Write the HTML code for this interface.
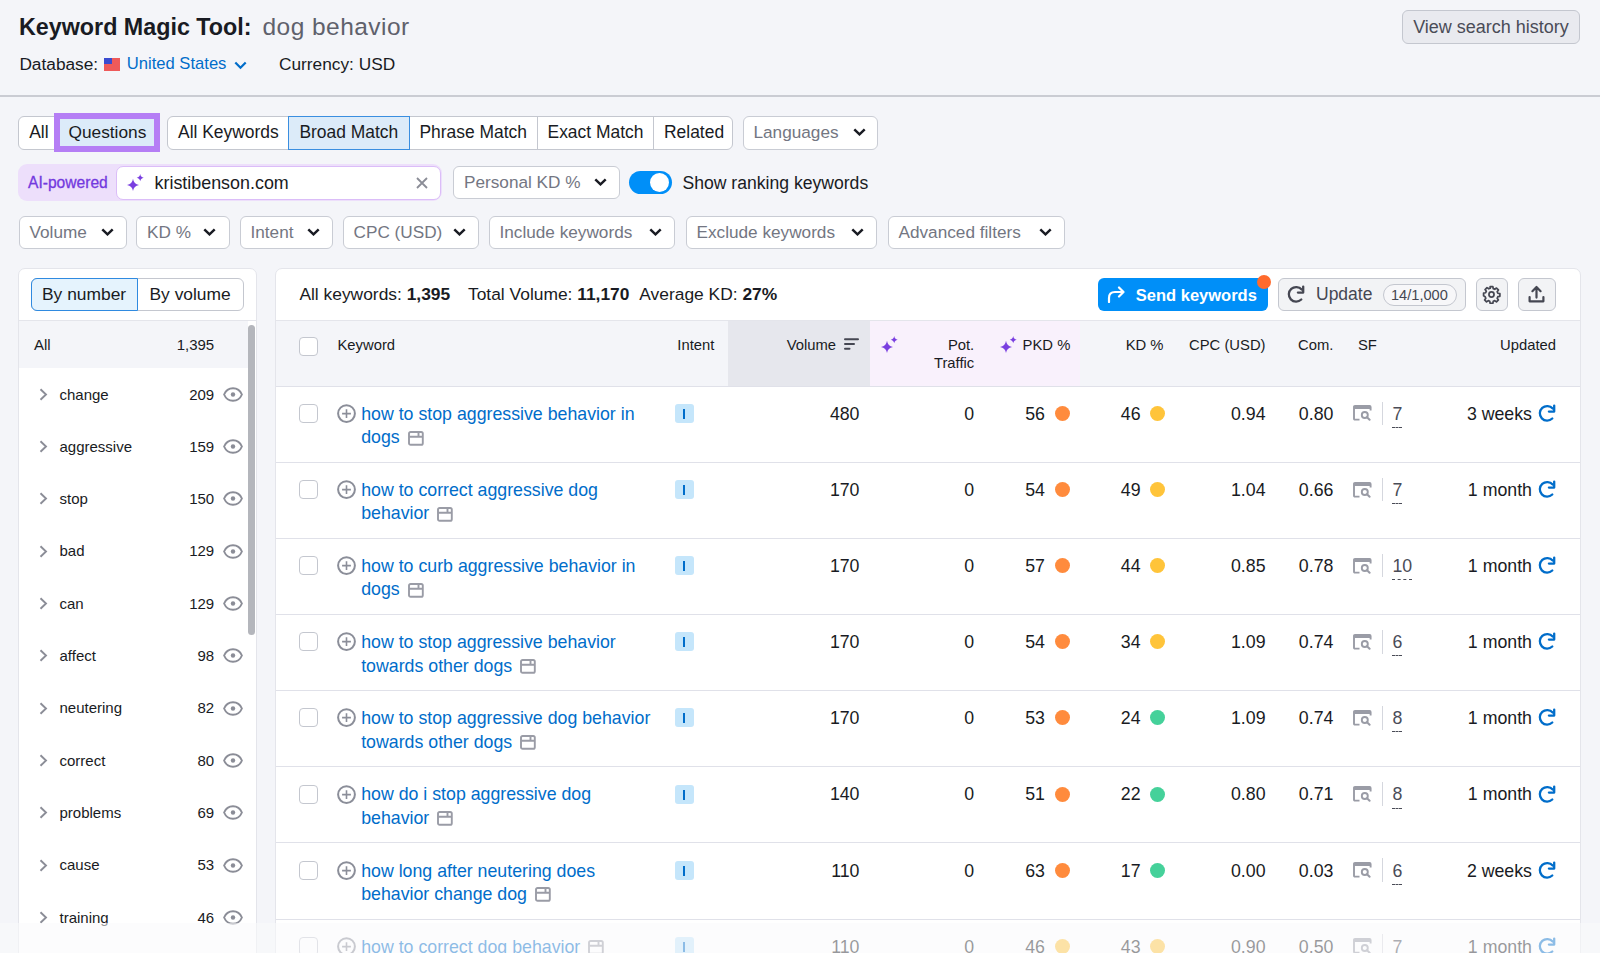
<!DOCTYPE html>
<html><head><meta charset="utf-8">
<style>
*{box-sizing:border-box;margin:0;padding:0}
html,body{width:1600px;height:968px;overflow:hidden}
body{position:relative;background:#f4f5f9;font-family:"Liberation Sans",sans-serif;color:#191b23;font-size:17.5px}
.a{position:absolute}
.t{position:absolute;white-space:nowrap;line-height:1}
.box{position:absolute;border:1px solid #c4c7cf;border-radius:6px;background:#fff}
.dd{position:absolute;border:1px solid #c9ccd4;border-radius:6px;background:#fff;height:33px;color:#737682;font-size:17.2px;line-height:31px;padding-left:10px;white-space:nowrap}
.dd svg{position:absolute;top:11px}
.seg{position:absolute;top:116px;height:33.5px;border:1px solid #c4c7cf;border-radius:6px;background:#fff;overflow:hidden;white-space:nowrap}
.seg span{position:absolute;top:0;height:100%;line-height:31px;font-size:17.5px;text-align:center}
.seg .div{border-left:1px solid #c4c7cf}
.sel{background:#dcebf9}
</style></head><body>

<!-- HEADER -->
<div class="t" style="left:19px;top:15.9px;font-size:23.3px;font-weight:bold">Keyword Magic Tool:</div>
<div class="t" style="left:262.5px;top:14.6px;font-size:24.5px;letter-spacing:0.45px;color:#5f616c">dog behavior</div>
<div class="t" style="left:19.4px;top:55.8px;font-size:17.3px">Database:</div>
<svg class="a" style="left:104px;top:58px" width="16" height="13" viewBox="0 0 16 13"><rect width="16" height="13" fill="#ee5a5a"/><rect width="8" height="6" fill="#3a4bd0"/></svg>
<div class="t" style="left:126.8px;top:55.6px;font-size:16.6px;color:#006dca">United States</div>
<svg class="a" style="left:233.5px;top:60.5px" width="13" height="9" viewBox="0 0 13 9"><path d="M1.3 1.5 L6.5 6.8 L11.7 1.5" fill="none" stroke="#006dca" stroke-width="2.2"/></svg>
<div class="t" style="left:279px;top:55.8px;font-size:17.3px">Currency: USD</div>
<div class="a" style="left:1402px;top:10px;width:178px;height:33.5px;border:1px solid #c4c7cf;border-radius:6px;background:#e9eaef;color:#4a4c57;font-size:18px;line-height:32.5px;text-align:center;white-space:nowrap">View search history</div>
<div class="a" style="left:0;top:95px;width:1600px;height:2px;background:#caccd3"></div>

<!-- ROW 1 tabs -->
<div class="a" style="left:18px;top:116px;width:140px;height:33.5px;border:1px solid #c4c7cf;border-radius:6px;background:#fff"></div>
<div class="a" style="left:58px;top:116px;width:99px;height:33.5px;background:#dcebf9"></div>
<div class="t" style="left:29.2px;top:123.6px;font-size:17.5px">All</div>
<div class="t" style="left:68.5px;top:123.6px;font-size:17.3px">Questions</div>
<div class="a" style="left:53.5px;top:112.8px;width:106px;height:39.5px;border:6px solid #b57ef5"></div>
<div class="a" style="left:167px;top:116px;width:566px;height:33.5px;border:1px solid #c4c7cf;border-radius:6px;background:#fff"></div>
<div class="a" style="left:288px;top:116px;width:121.5px;height:33.5px;border:1.5px solid #3a8ee0;background:#dcebf9"></div>
<div class="a" style="left:537px;top:117px;width:1px;height:31.5px;background:#c4c7cf"></div>
<div class="a" style="left:653px;top:117px;width:1px;height:31.5px;background:#c4c7cf"></div>
<div class="t" style="left:178px;top:123.6px;font-size:17.45px">All Keywords</div>
<div class="t" style="left:299.4px;top:123.6px;font-size:17.45px">Broad Match</div>
<div class="t" style="left:419.4px;top:123.6px;font-size:17.45px">Phrase Match</div>
<div class="t" style="left:547.5px;top:123.6px;font-size:17.45px">Exact Match</div>
<div class="t" style="left:664px;top:123.6px;font-size:17.45px">Related</div>
<div class="dd" style="left:742.5px;top:116px;width:135px;height:33.5px">Languages<svg style="left:109px" width="13" height="8" viewBox="0 0 13 8"><path d="M1.3 1.3 L6.5 6.3 L11.7 1.3" fill="none" stroke="#191b23" stroke-width="2.5"/></svg></div>

<!-- ROW 2 -->
<div class="a" style="left:18px;top:163.5px;width:424px;height:37.5px;border-radius:9px;background:#eddffb"></div>
<div class="t" style="left:28px;top:171px;font-size:15.6px;line-height:23px;color:#7339de;-webkit-text-stroke:0.3px #7339de">AI-powered</div>
<div class="a" style="left:115.5px;top:166px;width:325px;height:33.5px;border:1.6px solid #dbbdf8;border-radius:7px;background:#fff"></div>
<svg class="a" style="left:127px;top:174px" width="18" height="18" viewBox="0 0 18 18"><path d="M6.00 4.70 Q6.78 10.09 12.00 10.90 Q6.78 11.71 6.00 17.10 Q5.22 11.71 0.00 10.90 Q5.22 10.09 6.00 4.70Z" fill="#7a3fe0"/><path d="M13.20 0.10 Q13.65 3.23 16.70 3.70 Q13.65 4.17 13.20 7.30 Q12.74 4.17 9.70 3.70 Q12.74 3.23 13.20 0.10Z" fill="#7a3fe0"/></svg>
<div class="t" style="left:154.5px;top:172px;font-size:17.9px;line-height:23px">kristibenson.com</div>
<svg class="a" style="left:416px;top:177px" width="12" height="12" viewBox="0 0 12 12"><path d="M1 1 L11 11 M11 1 L1 11" stroke="#8b8d97" stroke-width="1.8"/></svg>
<div class="dd" style="left:453px;top:166px;width:167px">Personal KD %<svg style="left:140px" width="13" height="8" viewBox="0 0 13 8"><path d="M1.3 1.3 L6.5 6.3 L11.7 1.3" fill="none" stroke="#191b23" stroke-width="2.5"/></svg></div>
<div class="a" style="left:629px;top:171px;width:43px;height:23px;border-radius:12px;background:#008ff8"></div>
<div class="a" style="left:650px;top:173px;width:19px;height:19px;border-radius:50%;background:#fff"></div>
<div class="t" style="left:682.4px;top:171.8px;font-size:17.6px;line-height:23px">Show ranking keywords</div>

<!-- ROW 3 filters -->
<div class="dd" style="left:18.5px;top:216.2px;width:108px">Volume<svg style="left:81px" width="13" height="8" viewBox="0 0 13 8"><path d="M1.3 1.3 L6.5 6.3 L11.7 1.3" fill="none" stroke="#191b23" stroke-width="2.5"/></svg></div>
<div class="dd" style="left:136px;top:216.2px;width:93.5px">KD %<svg style="left:66px" width="13" height="8" viewBox="0 0 13 8"><path d="M1.3 1.3 L6.5 6.3 L11.7 1.3" fill="none" stroke="#191b23" stroke-width="2.5"/></svg></div>
<div class="dd" style="left:239.5px;top:216.2px;width:93px">Intent<svg style="left:66px" width="13" height="8" viewBox="0 0 13 8"><path d="M1.3 1.3 L6.5 6.3 L11.7 1.3" fill="none" stroke="#191b23" stroke-width="2.5"/></svg></div>
<div class="dd" style="left:342.5px;top:216.2px;width:136px">CPC (USD)<svg style="left:109px" width="13" height="8" viewBox="0 0 13 8"><path d="M1.3 1.3 L6.5 6.3 L11.7 1.3" fill="none" stroke="#191b23" stroke-width="2.5"/></svg></div>
<div class="dd" style="left:488.5px;top:216.2px;width:186.5px">Include keywords<svg style="left:159px" width="13" height="8" viewBox="0 0 13 8"><path d="M1.3 1.3 L6.5 6.3 L11.7 1.3" fill="none" stroke="#191b23" stroke-width="2.5"/></svg></div>
<div class="dd" style="left:685.5px;top:216.2px;width:191px">Exclude keywords<svg style="left:164px" width="13" height="8" viewBox="0 0 13 8"><path d="M1.3 1.3 L6.5 6.3 L11.7 1.3" fill="none" stroke="#191b23" stroke-width="2.5"/></svg></div>
<div class="dd" style="left:887.5px;top:216.2px;width:177px">Advanced filters<svg style="left:150px" width="13" height="8" viewBox="0 0 13 8"><path d="M1.3 1.3 L6.5 6.3 L11.7 1.3" fill="none" stroke="#191b23" stroke-width="2.5"/></svg></div>


<!-- LEFT CARD -->
<div class="a" style="left:18px;top:268px;width:238.5px;height:720px;background:#fff;border:1px solid #e4e5eb;border-radius:7px"></div>
<div class="a" style="left:31px;top:278px;width:212.5px;height:33px;border:1px solid #c4c7cf;border-radius:6px;background:#fff"></div>
<div class="a" style="left:31px;top:278px;width:107px;height:33px;border:1px solid #2f8ae0;border-radius:6px 0 0 6px;background:#e5f3fd"></div>
<div class="t" style="left:42.00px;top:286.07px;font-size:17.4px;color:#191b23;font-weight:normal;">By number</div>
<div class="t" style="left:149.50px;top:286.07px;font-size:17.4px;color:#191b23;font-weight:normal;">By volume</div>
<div class="a" style="left:19px;top:320px;width:236.5px;height:1px;background:#e4e5eb"></div>
<div class="a" style="left:19px;top:321px;width:229px;height:47px;background:#f4f5f9"></div>
<div class="t" style="left:34.00px;top:336.90px;font-size:15px;color:#191b23;font-weight:normal;">All</div>
<div class="t" style="right:1385.80px;top:336.90px;font-size:15px;color:#191b23;font-weight:normal;">1,395</div>
<div class="a" style="left:248px;top:325px;width:7px;height:309.5px;border-radius:4px;background:#b4b6bc"></div>
<svg class="a" style="left:38.5px;top:387.7px" width="9" height="13" viewBox="0 0 9 13"><path d="M1.5 1.2 L7 6.5 L1.5 11.8" fill="none" stroke="#8b8d97" stroke-width="1.9"/></svg>
<div class="t" style="left:59.50px;top:386.50px;font-size:15px;color:#191b23;font-weight:normal;">change</div>
<div class="t" style="right:1385.80px;top:386.50px;font-size:15px;color:#191b23;font-weight:normal;">209</div>
<svg class="a" style="left:222.5px;top:386.8px" width="20" height="15" viewBox="0 0 20 15"><path d="M1.1 7.5 C4.5 -0.8 15.5 -0.8 18.9 7.5 C15.5 15.8 4.5 15.8 1.1 7.5Z" fill="none" stroke="#8b8d97" stroke-width="1.9"/><circle cx="10" cy="7.5" r="2.2" fill="#8b8d97"/></svg>
<svg class="a" style="left:38.5px;top:440.03px" width="9" height="13" viewBox="0 0 9 13"><path d="M1.5 1.2 L7 6.5 L1.5 11.8" fill="none" stroke="#8b8d97" stroke-width="1.9"/></svg>
<div class="t" style="left:59.50px;top:438.83px;font-size:15px;color:#191b23;font-weight:normal;">aggressive</div>
<div class="t" style="right:1385.80px;top:438.83px;font-size:15px;color:#191b23;font-weight:normal;">159</div>
<svg class="a" style="left:222.5px;top:439.13px" width="20" height="15" viewBox="0 0 20 15"><path d="M1.1 7.5 C4.5 -0.8 15.5 -0.8 18.9 7.5 C15.5 15.8 4.5 15.8 1.1 7.5Z" fill="none" stroke="#8b8d97" stroke-width="1.9"/><circle cx="10" cy="7.5" r="2.2" fill="#8b8d97"/></svg>
<svg class="a" style="left:38.5px;top:492.36px" width="9" height="13" viewBox="0 0 9 13"><path d="M1.5 1.2 L7 6.5 L1.5 11.8" fill="none" stroke="#8b8d97" stroke-width="1.9"/></svg>
<div class="t" style="left:59.50px;top:491.16px;font-size:15px;color:#191b23;font-weight:normal;">stop</div>
<div class="t" style="right:1385.80px;top:491.16px;font-size:15px;color:#191b23;font-weight:normal;">150</div>
<svg class="a" style="left:222.5px;top:491.46px" width="20" height="15" viewBox="0 0 20 15"><path d="M1.1 7.5 C4.5 -0.8 15.5 -0.8 18.9 7.5 C15.5 15.8 4.5 15.8 1.1 7.5Z" fill="none" stroke="#8b8d97" stroke-width="1.9"/><circle cx="10" cy="7.5" r="2.2" fill="#8b8d97"/></svg>
<svg class="a" style="left:38.5px;top:544.69px" width="9" height="13" viewBox="0 0 9 13"><path d="M1.5 1.2 L7 6.5 L1.5 11.8" fill="none" stroke="#8b8d97" stroke-width="1.9"/></svg>
<div class="t" style="left:59.50px;top:543.49px;font-size:15px;color:#191b23;font-weight:normal;">bad</div>
<div class="t" style="right:1385.80px;top:543.49px;font-size:15px;color:#191b23;font-weight:normal;">129</div>
<svg class="a" style="left:222.5px;top:543.79px" width="20" height="15" viewBox="0 0 20 15"><path d="M1.1 7.5 C4.5 -0.8 15.5 -0.8 18.9 7.5 C15.5 15.8 4.5 15.8 1.1 7.5Z" fill="none" stroke="#8b8d97" stroke-width="1.9"/><circle cx="10" cy="7.5" r="2.2" fill="#8b8d97"/></svg>
<svg class="a" style="left:38.5px;top:597.02px" width="9" height="13" viewBox="0 0 9 13"><path d="M1.5 1.2 L7 6.5 L1.5 11.8" fill="none" stroke="#8b8d97" stroke-width="1.9"/></svg>
<div class="t" style="left:59.50px;top:595.82px;font-size:15px;color:#191b23;font-weight:normal;">can</div>
<div class="t" style="right:1385.80px;top:595.82px;font-size:15px;color:#191b23;font-weight:normal;">129</div>
<svg class="a" style="left:222.5px;top:596.12px" width="20" height="15" viewBox="0 0 20 15"><path d="M1.1 7.5 C4.5 -0.8 15.5 -0.8 18.9 7.5 C15.5 15.8 4.5 15.8 1.1 7.5Z" fill="none" stroke="#8b8d97" stroke-width="1.9"/><circle cx="10" cy="7.5" r="2.2" fill="#8b8d97"/></svg>
<svg class="a" style="left:38.5px;top:649.35px" width="9" height="13" viewBox="0 0 9 13"><path d="M1.5 1.2 L7 6.5 L1.5 11.8" fill="none" stroke="#8b8d97" stroke-width="1.9"/></svg>
<div class="t" style="left:59.50px;top:648.15px;font-size:15px;color:#191b23;font-weight:normal;">affect</div>
<div class="t" style="right:1385.80px;top:648.15px;font-size:15px;color:#191b23;font-weight:normal;">98</div>
<svg class="a" style="left:222.5px;top:648.45px" width="20" height="15" viewBox="0 0 20 15"><path d="M1.1 7.5 C4.5 -0.8 15.5 -0.8 18.9 7.5 C15.5 15.8 4.5 15.8 1.1 7.5Z" fill="none" stroke="#8b8d97" stroke-width="1.9"/><circle cx="10" cy="7.5" r="2.2" fill="#8b8d97"/></svg>
<svg class="a" style="left:38.5px;top:701.68px" width="9" height="13" viewBox="0 0 9 13"><path d="M1.5 1.2 L7 6.5 L1.5 11.8" fill="none" stroke="#8b8d97" stroke-width="1.9"/></svg>
<div class="t" style="left:59.50px;top:700.48px;font-size:15px;color:#191b23;font-weight:normal;">neutering</div>
<div class="t" style="right:1385.80px;top:700.48px;font-size:15px;color:#191b23;font-weight:normal;">82</div>
<svg class="a" style="left:222.5px;top:700.78px" width="20" height="15" viewBox="0 0 20 15"><path d="M1.1 7.5 C4.5 -0.8 15.5 -0.8 18.9 7.5 C15.5 15.8 4.5 15.8 1.1 7.5Z" fill="none" stroke="#8b8d97" stroke-width="1.9"/><circle cx="10" cy="7.5" r="2.2" fill="#8b8d97"/></svg>
<svg class="a" style="left:38.5px;top:754.01px" width="9" height="13" viewBox="0 0 9 13"><path d="M1.5 1.2 L7 6.5 L1.5 11.8" fill="none" stroke="#8b8d97" stroke-width="1.9"/></svg>
<div class="t" style="left:59.50px;top:752.81px;font-size:15px;color:#191b23;font-weight:normal;">correct</div>
<div class="t" style="right:1385.80px;top:752.81px;font-size:15px;color:#191b23;font-weight:normal;">80</div>
<svg class="a" style="left:222.5px;top:753.11px" width="20" height="15" viewBox="0 0 20 15"><path d="M1.1 7.5 C4.5 -0.8 15.5 -0.8 18.9 7.5 C15.5 15.8 4.5 15.8 1.1 7.5Z" fill="none" stroke="#8b8d97" stroke-width="1.9"/><circle cx="10" cy="7.5" r="2.2" fill="#8b8d97"/></svg>
<svg class="a" style="left:38.5px;top:806.34px" width="9" height="13" viewBox="0 0 9 13"><path d="M1.5 1.2 L7 6.5 L1.5 11.8" fill="none" stroke="#8b8d97" stroke-width="1.9"/></svg>
<div class="t" style="left:59.50px;top:805.14px;font-size:15px;color:#191b23;font-weight:normal;">problems</div>
<div class="t" style="right:1385.80px;top:805.14px;font-size:15px;color:#191b23;font-weight:normal;">69</div>
<svg class="a" style="left:222.5px;top:805.44px" width="20" height="15" viewBox="0 0 20 15"><path d="M1.1 7.5 C4.5 -0.8 15.5 -0.8 18.9 7.5 C15.5 15.8 4.5 15.8 1.1 7.5Z" fill="none" stroke="#8b8d97" stroke-width="1.9"/><circle cx="10" cy="7.5" r="2.2" fill="#8b8d97"/></svg>
<svg class="a" style="left:38.5px;top:858.67px" width="9" height="13" viewBox="0 0 9 13"><path d="M1.5 1.2 L7 6.5 L1.5 11.8" fill="none" stroke="#8b8d97" stroke-width="1.9"/></svg>
<div class="t" style="left:59.50px;top:857.47px;font-size:15px;color:#191b23;font-weight:normal;">cause</div>
<div class="t" style="right:1385.80px;top:857.47px;font-size:15px;color:#191b23;font-weight:normal;">53</div>
<svg class="a" style="left:222.5px;top:857.77px" width="20" height="15" viewBox="0 0 20 15"><path d="M1.1 7.5 C4.5 -0.8 15.5 -0.8 18.9 7.5 C15.5 15.8 4.5 15.8 1.1 7.5Z" fill="none" stroke="#8b8d97" stroke-width="1.9"/><circle cx="10" cy="7.5" r="2.2" fill="#8b8d97"/></svg>
<svg class="a" style="left:38.5px;top:911.0px" width="9" height="13" viewBox="0 0 9 13"><path d="M1.5 1.2 L7 6.5 L1.5 11.8" fill="none" stroke="#8b8d97" stroke-width="1.9"/></svg>
<div class="t" style="left:59.50px;top:909.80px;font-size:15px;color:#191b23;font-weight:normal;">training</div>
<div class="t" style="right:1385.80px;top:909.80px;font-size:15px;color:#191b23;font-weight:normal;">46</div>
<svg class="a" style="left:222.5px;top:910.1px" width="20" height="15" viewBox="0 0 20 15"><path d="M1.1 7.5 C4.5 -0.8 15.5 -0.8 18.9 7.5 C15.5 15.8 4.5 15.8 1.1 7.5Z" fill="none" stroke="#8b8d97" stroke-width="1.9"/><circle cx="10" cy="7.5" r="2.2" fill="#8b8d97"/></svg>
<!-- RIGHT CARD -->
<div class="a" style="left:275px;top:268px;width:1305.5px;height:720px;background:#fff;border:1px solid #e4e5eb;border-radius:7px"></div>
<div class="t" style="left:299.40px;top:285.87px;font-size:17.4px;color:#191b23;font-weight:normal;">All keywords: <b>1,395</b></div>
<div class="t" style="left:468.00px;top:285.87px;font-size:17.4px;color:#191b23;font-weight:normal;">Total Volume: <b>11,170</b></div>
<div class="t" style="left:639.30px;top:285.87px;font-size:17.4px;color:#191b23;font-weight:normal;">Average KD: <b>27%</b></div>
<div class="a" style="left:1097.5px;top:278px;width:170px;height:33px;border-radius:6px;background:#008ff8"></div>
<svg class="a" style="left:1107px;top:286px" width="19" height="17" viewBox="0 0 19 17"><path d="M2 16 V12 Q2 6 8 6 H16.5 M12 1.5 L16.5 6 L12 10.5" fill="none" stroke="#fff" stroke-width="2.2" stroke-linecap="round" stroke-linejoin="round"/></svg>
<div class="t" style="left:1135.80px;top:286.83px;font-size:16.5px;color:#fff;font-weight:bold;">Send keywords</div>
<div class="a" style="left:1256.5px;top:275px;width:14px;height:14px;border-radius:50%;background:#ff6a2c"></div>
<div class="a" style="left:1277.5px;top:278px;width:188px;height:33px;border:1px solid #c4c7cf;border-radius:6px;background:#f2f3f5"></div>
<svg class="a" style="left:1287px;top:285px" width="19" height="19" viewBox="0 0 19 19"><path d="M14.3 14.5 A7.3 7.3 0 1 1 14.7 4.6" fill="none" stroke="#454752" stroke-width="2.3" stroke-linecap="round"/><path d="M16.2 1.6 V7.6 H10.9" fill="none" stroke="#454752" stroke-width="2.3" stroke-linecap="round" stroke-linejoin="round"/></svg>
<div class="t" style="left:1316.00px;top:285.99px;font-size:17.5px;color:#454752;font-weight:normal;">Update</div>
<div class="a" style="left:1383px;top:283.5px;width:73.5px;height:22.5px;border:1px solid #c4c7cf;border-radius:12px;background:#f7f7f9"></div>
<div class="t" style="left:1391.00px;top:287.94px;font-size:14.6px;color:#454752;font-weight:normal;">14/1,000</div>
<div class="a" style="left:1475.5px;top:278px;width:32px;height:33px;border:1px solid #c4c7cf;border-radius:6px;background:#f2f3f5"></div>
<svg class="a" style="left:1482px;top:285px" width="19" height="19" viewBox="0 0 24 24"><path d="M10.3 2h3.4l.5 2.6 1.9.8 2.2-1.5 2.4 2.4-1.5 2.2.8 1.9 2.6.5v3.4l-2.6.5-.8 1.9 1.5 2.2-2.4 2.4-2.2-1.5-1.9.8-.5 2.6h-3.4l-.5-2.6-1.9-.8-2.2 1.5-2.4-2.4 1.5-2.2-.8-1.9L2 13.7v-3.4l2.6-.5.8-1.9-1.5-2.2 2.4-2.4 2.2 1.5 1.9-.8z" fill="none" stroke="#454752" stroke-width="2.2" stroke-linejoin="round"/><circle cx="12" cy="12" r="3.2" fill="none" stroke="#454752" stroke-width="2.2"/></svg>
<div class="a" style="left:1517.5px;top:278px;width:38.5px;height:33px;border:1px solid #c4c7cf;border-radius:6px;background:#f2f3f5"></div>
<svg class="a" style="left:1527px;top:285px" width="19" height="18" viewBox="0 0 19 18"><path d="M9.5 12.6 V2.2 M5.4 6.2 L9.5 2 L13.6 6.2 M2.6 12 V16.3 H16.4 V12" fill="none" stroke="#454752" stroke-width="2.2" stroke-linecap="round" stroke-linejoin="round"/></svg>
<div class="a" style="left:276px;top:320px;width:1303.5px;height:1px;background:#e4e5eb"></div>
<div class="a" style="left:276px;top:321px;width:1303.5px;height:65px;background:#f4f5f9"></div>
<div class="a" style="left:727.5px;top:321px;width:142.5px;height:65px;background:#e6e7ed"></div>
<div class="a" style="left:870px;top:321px;width:209.5px;height:65px;background:#f9f1fc"></div>
<div class="a" style="left:276px;top:386px;width:1303.5px;height:1px;background:#e0e1e9"></div>
<div class="a" style="left:299px;top:337.3px;width:19px;height:19px;border:1px solid #c4c7cf;border-radius:4px;background:#fff"></div>
<div class="t" style="left:337.50px;top:337.67px;font-size:14.8px;color:#191b23;font-weight:normal;">Keyword</div>
<div class="t" style="left:677.30px;top:337.67px;font-size:14.8px;color:#191b23;font-weight:normal;">Intent</div>
<div class="t" style="right:764.00px;top:337.67px;font-size:14.8px;color:#191b23;font-weight:normal;">Volume</div>
<svg class="a" style="left:843.5px;top:338px" width="15" height="12" viewBox="0 0 15 12"><path d="M1 1.2 H14 M1 6 H10 M1 10.8 H5.5" stroke="#454752" stroke-width="2" stroke-linecap="round"/></svg>
<svg class="a" style="left:880.5px;top:336px" width="18" height="18" viewBox="0 0 18 18"><path d="M6.00 4.70 Q6.78 10.09 12.00 10.90 Q6.78 11.71 6.00 17.10 Q5.22 11.71 0.00 10.90 Q5.22 10.09 6.00 4.70Z" fill="#7a3fe0"/><path d="M13.20 0.10 Q13.65 3.23 16.70 3.70 Q13.65 4.17 13.20 7.30 Q12.74 4.17 9.70 3.70 Q12.74 3.23 13.20 0.10Z" fill="#7a3fe0"/></svg>
<div class="t" style="right:625.80px;top:337.67px;font-size:14.8px;color:#191b23;font-weight:normal;">Pot.</div>
<div class="t" style="right:625.80px;top:355.87px;font-size:14.8px;color:#191b23;font-weight:normal;">Traffic</div>
<svg class="a" style="left:1000px;top:336px" width="18" height="18" viewBox="0 0 18 18"><path d="M6.00 4.70 Q6.78 10.09 12.00 10.90 Q6.78 11.71 6.00 17.10 Q5.22 11.71 0.00 10.90 Q5.22 10.09 6.00 4.70Z" fill="#7a3fe0"/><path d="M13.20 0.10 Q13.65 3.23 16.70 3.70 Q13.65 4.17 13.20 7.30 Q12.74 4.17 9.70 3.70 Q12.74 3.23 13.20 0.10Z" fill="#7a3fe0"/></svg>
<div class="t" style="left:1022.60px;top:337.67px;font-size:14.8px;color:#191b23;font-weight:normal;">PKD %</div>
<div class="t" style="right:436.50px;top:337.67px;font-size:14.8px;color:#191b23;font-weight:normal;">KD %</div>
<div class="t" style="right:334.50px;top:337.67px;font-size:14.8px;color:#191b23;font-weight:normal;">CPC (USD)</div>
<div class="t" style="right:266.60px;top:337.67px;font-size:14.8px;color:#191b23;font-weight:normal;">Com.</div>
<div class="t" style="left:1358.00px;top:337.67px;font-size:14.8px;color:#191b23;font-weight:normal;">SF</div>
<div class="t" style="right:44.00px;top:337.67px;font-size:14.8px;color:#191b23;font-weight:normal;">Updated</div>
<div class="a" style="left:276px;top:461.9px;width:1303.5px;height:1px;background:#e0e1e9"></div>
<div class="a" style="left:299px;top:404.0px;width:19px;height:19px;border:1px solid #c4c7cf;border-radius:4px;background:#fff"></div>
<svg class="a" style="left:337px;top:404.0px" width="19" height="19" viewBox="0 0 19 19"><circle cx="9.5" cy="9.6" r="8.4" fill="none" stroke="#8b8e99" stroke-width="2"/><path d="M9.5 5.2 V14 M5.1 9.6 H13.9" stroke="#8b8e99" stroke-width="1.6"/></svg>
<div class="t" style="left:361.20px;top:405.97px;font-size:17.75px;color:#006dca;font-weight:normal;">how to stop aggressive behavior in</div>
<div class="t" style="left:361.20px;top:429.27px;font-size:17.75px;color:#006dca;font-weight:normal;">dogs</div>
<svg class="a" style="left:407.7px;top:430.5px" width="16" height="15" viewBox="0 0 16 15"><rect x="1" y="1" width="13.8" height="12.8" rx="1.6" fill="none" stroke="#9a9ca6" stroke-width="1.9"/><path d="M1 5.8 H14.8 M10.5 1 V5.8" stroke="#9a9ca6" stroke-width="1.9"/></svg>
<div class="a" style="left:674.7px;top:404.0px;width:19px;height:19px;border-radius:3px;background:#c5e6fb"></div>
<div class="a" style="left:683.2px;top:409.0px;width:2.2px;height:10px;background:#006dca"></div>
<div class="t" style="right:740.50px;top:405.97px;font-size:17.75px;color:#191b23;font-weight:normal;">480</div>
<div class="t" style="right:625.80px;top:405.97px;font-size:17.75px;color:#191b23;font-weight:normal;">0</div>
<div class="t" style="right:555.00px;top:405.97px;font-size:17.75px;color:#191b23;font-weight:normal;">56</div>
<div class="a" style="left:1055px;top:406.0px;width:15px;height:15px;border-radius:50%;background:#ff8b3d"></div>
<div class="t" style="right:459.40px;top:405.97px;font-size:17.75px;color:#191b23;font-weight:normal;">46</div>
<div class="a" style="left:1150.3px;top:406.0px;width:15px;height:15px;border-radius:50%;background:#ffc43a"></div>
<div class="t" style="right:334.50px;top:405.97px;font-size:17.75px;color:#191b23;font-weight:normal;">0.94</div>
<div class="t" style="right:266.60px;top:405.97px;font-size:17.75px;color:#191b23;font-weight:normal;">0.80</div>
<svg class="a" style="left:1352.5px;top:405.4px" width="19" height="16" viewBox="0 0 19 16"><path d="M6.5 14.6 H1.9 Q1 14.6 1 13.7 V2 Q1 1 2 1 H16.6 Q17.6 1 17.6 2 V5.5" fill="none" stroke="#9a9ca6" stroke-width="1.9"/><rect x="1" y="1" width="16.6" height="3" fill="#9a9ca6"/><circle cx="11.8" cy="10" r="3" fill="none" stroke="#9a9ca6" stroke-width="1.9"/><path d="M14 12.2 L16.6 14.8" stroke="#9a9ca6" stroke-width="2" stroke-linecap="round"/></svg>
<div class="a" style="left:1381.5px;top:401.7px;width:1px;height:23.5px;background:#d5d7de"></div>
<div class="t" style="left:1392.40px;top:405.97px;font-size:17.75px;color:#4a4c57;font-weight:normal;">7</div>
<div class="a" style="left:1392.4px;top:427.0px;width:9.9px;height:0;border-top:1px dashed #4a4c57"></div>
<div class="t" style="right:68.00px;top:405.97px;font-size:17.75px;color:#191b23;font-weight:normal;">3 weeks</div>
<svg class="a" style="left:1538px;top:404.0px" width="19" height="19" viewBox="0 0 19 19"><path d="M14.3 14.5 A7.3 7.3 0 1 1 14.7 4.6" fill="none" stroke="#006dca" stroke-width="2.3" stroke-linecap="round"/><path d="M16.2 1.6 V7.6 H10.9" fill="none" stroke="#006dca" stroke-width="2.3" stroke-linecap="round" stroke-linejoin="round"/></svg>
<div class="a" style="left:276px;top:538.0px;width:1303.5px;height:1px;background:#e0e1e9"></div>
<div class="a" style="left:299px;top:480.1px;width:19px;height:19px;border:1px solid #c4c7cf;border-radius:4px;background:#fff"></div>
<svg class="a" style="left:337px;top:480.1px" width="19" height="19" viewBox="0 0 19 19"><circle cx="9.5" cy="9.6" r="8.4" fill="none" stroke="#8b8e99" stroke-width="2"/><path d="M9.5 5.2 V14 M5.1 9.6 H13.9" stroke="#8b8e99" stroke-width="1.6"/></svg>
<div class="t" style="left:361.20px;top:482.07px;font-size:17.75px;color:#006dca;font-weight:normal;">how to correct aggressive dog</div>
<div class="t" style="left:361.20px;top:505.37px;font-size:17.75px;color:#006dca;font-weight:normal;">behavior</div>
<svg class="a" style="left:437.3px;top:506.6px" width="16" height="15" viewBox="0 0 16 15"><rect x="1" y="1" width="13.8" height="12.8" rx="1.6" fill="none" stroke="#9a9ca6" stroke-width="1.9"/><path d="M1 5.8 H14.8 M10.5 1 V5.8" stroke="#9a9ca6" stroke-width="1.9"/></svg>
<div class="a" style="left:674.7px;top:480.1px;width:19px;height:19px;border-radius:3px;background:#c5e6fb"></div>
<div class="a" style="left:683.2px;top:485.1px;width:2.2px;height:10px;background:#006dca"></div>
<div class="t" style="right:740.50px;top:482.07px;font-size:17.75px;color:#191b23;font-weight:normal;">170</div>
<div class="t" style="right:625.80px;top:482.07px;font-size:17.75px;color:#191b23;font-weight:normal;">0</div>
<div class="t" style="right:555.00px;top:482.07px;font-size:17.75px;color:#191b23;font-weight:normal;">54</div>
<div class="a" style="left:1055px;top:482.1px;width:15px;height:15px;border-radius:50%;background:#ff8b3d"></div>
<div class="t" style="right:459.40px;top:482.07px;font-size:17.75px;color:#191b23;font-weight:normal;">49</div>
<div class="a" style="left:1150.3px;top:482.1px;width:15px;height:15px;border-radius:50%;background:#ffc43a"></div>
<div class="t" style="right:334.50px;top:482.07px;font-size:17.75px;color:#191b23;font-weight:normal;">1.04</div>
<div class="t" style="right:266.60px;top:482.07px;font-size:17.75px;color:#191b23;font-weight:normal;">0.66</div>
<svg class="a" style="left:1352.5px;top:481.5px" width="19" height="16" viewBox="0 0 19 16"><path d="M6.5 14.6 H1.9 Q1 14.6 1 13.7 V2 Q1 1 2 1 H16.6 Q17.6 1 17.6 2 V5.5" fill="none" stroke="#9a9ca6" stroke-width="1.9"/><rect x="1" y="1" width="16.6" height="3" fill="#9a9ca6"/><circle cx="11.8" cy="10" r="3" fill="none" stroke="#9a9ca6" stroke-width="1.9"/><path d="M14 12.2 L16.6 14.8" stroke="#9a9ca6" stroke-width="2" stroke-linecap="round"/></svg>
<div class="a" style="left:1381.5px;top:477.8px;width:1px;height:23.5px;background:#d5d7de"></div>
<div class="t" style="left:1392.40px;top:482.07px;font-size:17.75px;color:#4a4c57;font-weight:normal;">7</div>
<div class="a" style="left:1392.4px;top:503.1px;width:9.9px;height:0;border-top:1px dashed #4a4c57"></div>
<div class="t" style="right:68.00px;top:482.07px;font-size:17.75px;color:#191b23;font-weight:normal;">1 month</div>
<svg class="a" style="left:1538px;top:480.1px" width="19" height="19" viewBox="0 0 19 19"><path d="M14.3 14.5 A7.3 7.3 0 1 1 14.7 4.6" fill="none" stroke="#006dca" stroke-width="2.3" stroke-linecap="round"/><path d="M16.2 1.6 V7.6 H10.9" fill="none" stroke="#006dca" stroke-width="2.3" stroke-linecap="round" stroke-linejoin="round"/></svg>
<div class="a" style="left:276px;top:614.1px;width:1303.5px;height:1px;background:#e0e1e9"></div>
<div class="a" style="left:299px;top:556.2px;width:19px;height:19px;border:1px solid #c4c7cf;border-radius:4px;background:#fff"></div>
<svg class="a" style="left:337px;top:556.2px" width="19" height="19" viewBox="0 0 19 19"><circle cx="9.5" cy="9.6" r="8.4" fill="none" stroke="#8b8e99" stroke-width="2"/><path d="M9.5 5.2 V14 M5.1 9.6 H13.9" stroke="#8b8e99" stroke-width="1.6"/></svg>
<div class="t" style="left:361.20px;top:558.17px;font-size:17.75px;color:#006dca;font-weight:normal;">how to curb aggressive behavior in</div>
<div class="t" style="left:361.20px;top:581.47px;font-size:17.75px;color:#006dca;font-weight:normal;">dogs</div>
<svg class="a" style="left:407.7px;top:582.7px" width="16" height="15" viewBox="0 0 16 15"><rect x="1" y="1" width="13.8" height="12.8" rx="1.6" fill="none" stroke="#9a9ca6" stroke-width="1.9"/><path d="M1 5.8 H14.8 M10.5 1 V5.8" stroke="#9a9ca6" stroke-width="1.9"/></svg>
<div class="a" style="left:674.7px;top:556.2px;width:19px;height:19px;border-radius:3px;background:#c5e6fb"></div>
<div class="a" style="left:683.2px;top:561.2px;width:2.2px;height:10px;background:#006dca"></div>
<div class="t" style="right:740.50px;top:558.17px;font-size:17.75px;color:#191b23;font-weight:normal;">170</div>
<div class="t" style="right:625.80px;top:558.17px;font-size:17.75px;color:#191b23;font-weight:normal;">0</div>
<div class="t" style="right:555.00px;top:558.17px;font-size:17.75px;color:#191b23;font-weight:normal;">57</div>
<div class="a" style="left:1055px;top:558.2px;width:15px;height:15px;border-radius:50%;background:#ff8b3d"></div>
<div class="t" style="right:459.40px;top:558.17px;font-size:17.75px;color:#191b23;font-weight:normal;">44</div>
<div class="a" style="left:1150.3px;top:558.2px;width:15px;height:15px;border-radius:50%;background:#ffc43a"></div>
<div class="t" style="right:334.50px;top:558.17px;font-size:17.75px;color:#191b23;font-weight:normal;">0.85</div>
<div class="t" style="right:266.60px;top:558.17px;font-size:17.75px;color:#191b23;font-weight:normal;">0.78</div>
<svg class="a" style="left:1352.5px;top:557.6px" width="19" height="16" viewBox="0 0 19 16"><path d="M6.5 14.6 H1.9 Q1 14.6 1 13.7 V2 Q1 1 2 1 H16.6 Q17.6 1 17.6 2 V5.5" fill="none" stroke="#9a9ca6" stroke-width="1.9"/><rect x="1" y="1" width="16.6" height="3" fill="#9a9ca6"/><circle cx="11.8" cy="10" r="3" fill="none" stroke="#9a9ca6" stroke-width="1.9"/><path d="M14 12.2 L16.6 14.8" stroke="#9a9ca6" stroke-width="2" stroke-linecap="round"/></svg>
<div class="a" style="left:1381.5px;top:553.9px;width:1px;height:23.5px;background:#d5d7de"></div>
<div class="t" style="left:1392.40px;top:558.17px;font-size:17.75px;color:#4a4c57;font-weight:normal;">10</div>
<div class="a" style="left:1392.4px;top:579.2px;width:19.7px;height:0;border-top:1px dashed #4a4c57"></div>
<div class="t" style="right:68.00px;top:558.17px;font-size:17.75px;color:#191b23;font-weight:normal;">1 month</div>
<svg class="a" style="left:1538px;top:556.2px" width="19" height="19" viewBox="0 0 19 19"><path d="M14.3 14.5 A7.3 7.3 0 1 1 14.7 4.6" fill="none" stroke="#006dca" stroke-width="2.3" stroke-linecap="round"/><path d="M16.2 1.6 V7.6 H10.9" fill="none" stroke="#006dca" stroke-width="2.3" stroke-linecap="round" stroke-linejoin="round"/></svg>
<div class="a" style="left:276px;top:690.2px;width:1303.5px;height:1px;background:#e0e1e9"></div>
<div class="a" style="left:299px;top:632.3px;width:19px;height:19px;border:1px solid #c4c7cf;border-radius:4px;background:#fff"></div>
<svg class="a" style="left:337px;top:632.3px" width="19" height="19" viewBox="0 0 19 19"><circle cx="9.5" cy="9.6" r="8.4" fill="none" stroke="#8b8e99" stroke-width="2"/><path d="M9.5 5.2 V14 M5.1 9.6 H13.9" stroke="#8b8e99" stroke-width="1.6"/></svg>
<div class="t" style="left:361.20px;top:634.27px;font-size:17.75px;color:#006dca;font-weight:normal;">how to stop aggressive behavior</div>
<div class="t" style="left:361.20px;top:657.57px;font-size:17.75px;color:#006dca;font-weight:normal;">towards other dogs</div>
<svg class="a" style="left:520.1px;top:658.8px" width="16" height="15" viewBox="0 0 16 15"><rect x="1" y="1" width="13.8" height="12.8" rx="1.6" fill="none" stroke="#9a9ca6" stroke-width="1.9"/><path d="M1 5.8 H14.8 M10.5 1 V5.8" stroke="#9a9ca6" stroke-width="1.9"/></svg>
<div class="a" style="left:674.7px;top:632.3px;width:19px;height:19px;border-radius:3px;background:#c5e6fb"></div>
<div class="a" style="left:683.2px;top:637.3px;width:2.2px;height:10px;background:#006dca"></div>
<div class="t" style="right:740.50px;top:634.27px;font-size:17.75px;color:#191b23;font-weight:normal;">170</div>
<div class="t" style="right:625.80px;top:634.27px;font-size:17.75px;color:#191b23;font-weight:normal;">0</div>
<div class="t" style="right:555.00px;top:634.27px;font-size:17.75px;color:#191b23;font-weight:normal;">54</div>
<div class="a" style="left:1055px;top:634.3px;width:15px;height:15px;border-radius:50%;background:#ff8b3d"></div>
<div class="t" style="right:459.40px;top:634.27px;font-size:17.75px;color:#191b23;font-weight:normal;">34</div>
<div class="a" style="left:1150.3px;top:634.3px;width:15px;height:15px;border-radius:50%;background:#ffc43a"></div>
<div class="t" style="right:334.50px;top:634.27px;font-size:17.75px;color:#191b23;font-weight:normal;">1.09</div>
<div class="t" style="right:266.60px;top:634.27px;font-size:17.75px;color:#191b23;font-weight:normal;">0.74</div>
<svg class="a" style="left:1352.5px;top:633.7px" width="19" height="16" viewBox="0 0 19 16"><path d="M6.5 14.6 H1.9 Q1 14.6 1 13.7 V2 Q1 1 2 1 H16.6 Q17.6 1 17.6 2 V5.5" fill="none" stroke="#9a9ca6" stroke-width="1.9"/><rect x="1" y="1" width="16.6" height="3" fill="#9a9ca6"/><circle cx="11.8" cy="10" r="3" fill="none" stroke="#9a9ca6" stroke-width="1.9"/><path d="M14 12.2 L16.6 14.8" stroke="#9a9ca6" stroke-width="2" stroke-linecap="round"/></svg>
<div class="a" style="left:1381.5px;top:630.0px;width:1px;height:23.5px;background:#d5d7de"></div>
<div class="t" style="left:1392.40px;top:634.27px;font-size:17.75px;color:#4a4c57;font-weight:normal;">6</div>
<div class="a" style="left:1392.4px;top:655.3px;width:9.9px;height:0;border-top:1px dashed #4a4c57"></div>
<div class="t" style="right:68.00px;top:634.27px;font-size:17.75px;color:#191b23;font-weight:normal;">1 month</div>
<svg class="a" style="left:1538px;top:632.3px" width="19" height="19" viewBox="0 0 19 19"><path d="M14.3 14.5 A7.3 7.3 0 1 1 14.7 4.6" fill="none" stroke="#006dca" stroke-width="2.3" stroke-linecap="round"/><path d="M16.2 1.6 V7.6 H10.9" fill="none" stroke="#006dca" stroke-width="2.3" stroke-linecap="round" stroke-linejoin="round"/></svg>
<div class="a" style="left:276px;top:766.3px;width:1303.5px;height:1px;background:#e0e1e9"></div>
<div class="a" style="left:299px;top:708.4px;width:19px;height:19px;border:1px solid #c4c7cf;border-radius:4px;background:#fff"></div>
<svg class="a" style="left:337px;top:708.4px" width="19" height="19" viewBox="0 0 19 19"><circle cx="9.5" cy="9.6" r="8.4" fill="none" stroke="#8b8e99" stroke-width="2"/><path d="M9.5 5.2 V14 M5.1 9.6 H13.9" stroke="#8b8e99" stroke-width="1.6"/></svg>
<div class="t" style="left:361.20px;top:710.37px;font-size:17.75px;color:#006dca;font-weight:normal;">how to stop aggressive dog behavior</div>
<div class="t" style="left:361.20px;top:733.67px;font-size:17.75px;color:#006dca;font-weight:normal;">towards other dogs</div>
<svg class="a" style="left:520.1px;top:734.9px" width="16" height="15" viewBox="0 0 16 15"><rect x="1" y="1" width="13.8" height="12.8" rx="1.6" fill="none" stroke="#9a9ca6" stroke-width="1.9"/><path d="M1 5.8 H14.8 M10.5 1 V5.8" stroke="#9a9ca6" stroke-width="1.9"/></svg>
<div class="a" style="left:674.7px;top:708.4px;width:19px;height:19px;border-radius:3px;background:#c5e6fb"></div>
<div class="a" style="left:683.2px;top:713.4px;width:2.2px;height:10px;background:#006dca"></div>
<div class="t" style="right:740.50px;top:710.37px;font-size:17.75px;color:#191b23;font-weight:normal;">170</div>
<div class="t" style="right:625.80px;top:710.37px;font-size:17.75px;color:#191b23;font-weight:normal;">0</div>
<div class="t" style="right:555.00px;top:710.37px;font-size:17.75px;color:#191b23;font-weight:normal;">53</div>
<div class="a" style="left:1055px;top:710.4px;width:15px;height:15px;border-radius:50%;background:#ff8b3d"></div>
<div class="t" style="right:459.40px;top:710.37px;font-size:17.75px;color:#191b23;font-weight:normal;">24</div>
<div class="a" style="left:1150.3px;top:710.4px;width:15px;height:15px;border-radius:50%;background:#45d19a"></div>
<div class="t" style="right:334.50px;top:710.37px;font-size:17.75px;color:#191b23;font-weight:normal;">1.09</div>
<div class="t" style="right:266.60px;top:710.37px;font-size:17.75px;color:#191b23;font-weight:normal;">0.74</div>
<svg class="a" style="left:1352.5px;top:709.8px" width="19" height="16" viewBox="0 0 19 16"><path d="M6.5 14.6 H1.9 Q1 14.6 1 13.7 V2 Q1 1 2 1 H16.6 Q17.6 1 17.6 2 V5.5" fill="none" stroke="#9a9ca6" stroke-width="1.9"/><rect x="1" y="1" width="16.6" height="3" fill="#9a9ca6"/><circle cx="11.8" cy="10" r="3" fill="none" stroke="#9a9ca6" stroke-width="1.9"/><path d="M14 12.2 L16.6 14.8" stroke="#9a9ca6" stroke-width="2" stroke-linecap="round"/></svg>
<div class="a" style="left:1381.5px;top:706.1px;width:1px;height:23.5px;background:#d5d7de"></div>
<div class="t" style="left:1392.40px;top:710.37px;font-size:17.75px;color:#4a4c57;font-weight:normal;">8</div>
<div class="a" style="left:1392.4px;top:731.4px;width:9.9px;height:0;border-top:1px dashed #4a4c57"></div>
<div class="t" style="right:68.00px;top:710.37px;font-size:17.75px;color:#191b23;font-weight:normal;">1 month</div>
<svg class="a" style="left:1538px;top:708.4px" width="19" height="19" viewBox="0 0 19 19"><path d="M14.3 14.5 A7.3 7.3 0 1 1 14.7 4.6" fill="none" stroke="#006dca" stroke-width="2.3" stroke-linecap="round"/><path d="M16.2 1.6 V7.6 H10.9" fill="none" stroke="#006dca" stroke-width="2.3" stroke-linecap="round" stroke-linejoin="round"/></svg>
<div class="a" style="left:276px;top:842.4px;width:1303.5px;height:1px;background:#e0e1e9"></div>
<div class="a" style="left:299px;top:784.5px;width:19px;height:19px;border:1px solid #c4c7cf;border-radius:4px;background:#fff"></div>
<svg class="a" style="left:337px;top:784.5px" width="19" height="19" viewBox="0 0 19 19"><circle cx="9.5" cy="9.6" r="8.4" fill="none" stroke="#8b8e99" stroke-width="2"/><path d="M9.5 5.2 V14 M5.1 9.6 H13.9" stroke="#8b8e99" stroke-width="1.6"/></svg>
<div class="t" style="left:361.20px;top:786.47px;font-size:17.75px;color:#006dca;font-weight:normal;">how do i stop aggressive dog</div>
<div class="t" style="left:361.20px;top:809.77px;font-size:17.75px;color:#006dca;font-weight:normal;">behavior</div>
<svg class="a" style="left:437.3px;top:811.0px" width="16" height="15" viewBox="0 0 16 15"><rect x="1" y="1" width="13.8" height="12.8" rx="1.6" fill="none" stroke="#9a9ca6" stroke-width="1.9"/><path d="M1 5.8 H14.8 M10.5 1 V5.8" stroke="#9a9ca6" stroke-width="1.9"/></svg>
<div class="a" style="left:674.7px;top:784.5px;width:19px;height:19px;border-radius:3px;background:#c5e6fb"></div>
<div class="a" style="left:683.2px;top:789.5px;width:2.2px;height:10px;background:#006dca"></div>
<div class="t" style="right:740.50px;top:786.47px;font-size:17.75px;color:#191b23;font-weight:normal;">140</div>
<div class="t" style="right:625.80px;top:786.47px;font-size:17.75px;color:#191b23;font-weight:normal;">0</div>
<div class="t" style="right:555.00px;top:786.47px;font-size:17.75px;color:#191b23;font-weight:normal;">51</div>
<div class="a" style="left:1055px;top:786.5px;width:15px;height:15px;border-radius:50%;background:#ff8b3d"></div>
<div class="t" style="right:459.40px;top:786.47px;font-size:17.75px;color:#191b23;font-weight:normal;">22</div>
<div class="a" style="left:1150.3px;top:786.5px;width:15px;height:15px;border-radius:50%;background:#45d19a"></div>
<div class="t" style="right:334.50px;top:786.47px;font-size:17.75px;color:#191b23;font-weight:normal;">0.80</div>
<div class="t" style="right:266.60px;top:786.47px;font-size:17.75px;color:#191b23;font-weight:normal;">0.71</div>
<svg class="a" style="left:1352.5px;top:785.9px" width="19" height="16" viewBox="0 0 19 16"><path d="M6.5 14.6 H1.9 Q1 14.6 1 13.7 V2 Q1 1 2 1 H16.6 Q17.6 1 17.6 2 V5.5" fill="none" stroke="#9a9ca6" stroke-width="1.9"/><rect x="1" y="1" width="16.6" height="3" fill="#9a9ca6"/><circle cx="11.8" cy="10" r="3" fill="none" stroke="#9a9ca6" stroke-width="1.9"/><path d="M14 12.2 L16.6 14.8" stroke="#9a9ca6" stroke-width="2" stroke-linecap="round"/></svg>
<div class="a" style="left:1381.5px;top:782.2px;width:1px;height:23.5px;background:#d5d7de"></div>
<div class="t" style="left:1392.40px;top:786.47px;font-size:17.75px;color:#4a4c57;font-weight:normal;">8</div>
<div class="a" style="left:1392.4px;top:807.5px;width:9.9px;height:0;border-top:1px dashed #4a4c57"></div>
<div class="t" style="right:68.00px;top:786.47px;font-size:17.75px;color:#191b23;font-weight:normal;">1 month</div>
<svg class="a" style="left:1538px;top:784.5px" width="19" height="19" viewBox="0 0 19 19"><path d="M14.3 14.5 A7.3 7.3 0 1 1 14.7 4.6" fill="none" stroke="#006dca" stroke-width="2.3" stroke-linecap="round"/><path d="M16.2 1.6 V7.6 H10.9" fill="none" stroke="#006dca" stroke-width="2.3" stroke-linecap="round" stroke-linejoin="round"/></svg>
<div class="a" style="left:276px;top:918.5px;width:1303.5px;height:1px;background:#e0e1e9"></div>
<div class="a" style="left:299px;top:860.6px;width:19px;height:19px;border:1px solid #c4c7cf;border-radius:4px;background:#fff"></div>
<svg class="a" style="left:337px;top:860.6px" width="19" height="19" viewBox="0 0 19 19"><circle cx="9.5" cy="9.6" r="8.4" fill="none" stroke="#8b8e99" stroke-width="2"/><path d="M9.5 5.2 V14 M5.1 9.6 H13.9" stroke="#8b8e99" stroke-width="1.6"/></svg>
<div class="t" style="left:361.20px;top:862.57px;font-size:17.75px;color:#006dca;font-weight:normal;">how long after neutering does</div>
<div class="t" style="left:361.20px;top:885.87px;font-size:17.75px;color:#006dca;font-weight:normal;">behavior change dog</div>
<svg class="a" style="left:535.0px;top:887.1px" width="16" height="15" viewBox="0 0 16 15"><rect x="1" y="1" width="13.8" height="12.8" rx="1.6" fill="none" stroke="#9a9ca6" stroke-width="1.9"/><path d="M1 5.8 H14.8 M10.5 1 V5.8" stroke="#9a9ca6" stroke-width="1.9"/></svg>
<div class="a" style="left:674.7px;top:860.6px;width:19px;height:19px;border-radius:3px;background:#c5e6fb"></div>
<div class="a" style="left:683.2px;top:865.6px;width:2.2px;height:10px;background:#006dca"></div>
<div class="t" style="right:740.50px;top:862.57px;font-size:17.75px;color:#191b23;font-weight:normal;">110</div>
<div class="t" style="right:625.80px;top:862.57px;font-size:17.75px;color:#191b23;font-weight:normal;">0</div>
<div class="t" style="right:555.00px;top:862.57px;font-size:17.75px;color:#191b23;font-weight:normal;">63</div>
<div class="a" style="left:1055px;top:862.6px;width:15px;height:15px;border-radius:50%;background:#ff8b3d"></div>
<div class="t" style="right:459.40px;top:862.57px;font-size:17.75px;color:#191b23;font-weight:normal;">17</div>
<div class="a" style="left:1150.3px;top:862.6px;width:15px;height:15px;border-radius:50%;background:#45d19a"></div>
<div class="t" style="right:334.50px;top:862.57px;font-size:17.75px;color:#191b23;font-weight:normal;">0.00</div>
<div class="t" style="right:266.60px;top:862.57px;font-size:17.75px;color:#191b23;font-weight:normal;">0.03</div>
<svg class="a" style="left:1352.5px;top:862.0px" width="19" height="16" viewBox="0 0 19 16"><path d="M6.5 14.6 H1.9 Q1 14.6 1 13.7 V2 Q1 1 2 1 H16.6 Q17.6 1 17.6 2 V5.5" fill="none" stroke="#9a9ca6" stroke-width="1.9"/><rect x="1" y="1" width="16.6" height="3" fill="#9a9ca6"/><circle cx="11.8" cy="10" r="3" fill="none" stroke="#9a9ca6" stroke-width="1.9"/><path d="M14 12.2 L16.6 14.8" stroke="#9a9ca6" stroke-width="2" stroke-linecap="round"/></svg>
<div class="a" style="left:1381.5px;top:858.3px;width:1px;height:23.5px;background:#d5d7de"></div>
<div class="t" style="left:1392.40px;top:862.57px;font-size:17.75px;color:#4a4c57;font-weight:normal;">6</div>
<div class="a" style="left:1392.4px;top:883.6px;width:9.9px;height:0;border-top:1px dashed #4a4c57"></div>
<div class="t" style="right:68.00px;top:862.57px;font-size:17.75px;color:#191b23;font-weight:normal;">2 weeks</div>
<svg class="a" style="left:1538px;top:860.6px" width="19" height="19" viewBox="0 0 19 19"><path d="M14.3 14.5 A7.3 7.3 0 1 1 14.7 4.6" fill="none" stroke="#006dca" stroke-width="2.3" stroke-linecap="round"/><path d="M16.2 1.6 V7.6 H10.9" fill="none" stroke="#006dca" stroke-width="2.3" stroke-linecap="round" stroke-linejoin="round"/></svg>
<div class="a" style="left:299px;top:936.7px;width:19px;height:19px;border:1px solid #c4c7cf;border-radius:4px;background:#fff"></div>
<svg class="a" style="left:337px;top:936.7px" width="19" height="19" viewBox="0 0 19 19"><circle cx="9.5" cy="9.6" r="8.4" fill="none" stroke="#8b8e99" stroke-width="2"/><path d="M9.5 5.2 V14 M5.1 9.6 H13.9" stroke="#8b8e99" stroke-width="1.6"/></svg>
<div class="t" style="left:361.20px;top:938.67px;font-size:17.75px;color:#006dca;font-weight:normal;">how to correct dog behavior</div>
<svg class="a" style="left:588.2px;top:939.9px" width="16" height="15" viewBox="0 0 16 15"><rect x="1" y="1" width="13.8" height="12.8" rx="1.6" fill="none" stroke="#9a9ca6" stroke-width="1.9"/><path d="M1 5.8 H14.8 M10.5 1 V5.8" stroke="#9a9ca6" stroke-width="1.9"/></svg>
<div class="a" style="left:674.7px;top:936.7px;width:19px;height:19px;border-radius:3px;background:#c5e6fb"></div>
<div class="a" style="left:683.2px;top:941.7px;width:2.2px;height:10px;background:#006dca"></div>
<div class="t" style="right:740.50px;top:938.67px;font-size:17.75px;color:#191b23;font-weight:normal;">110</div>
<div class="t" style="right:625.80px;top:938.67px;font-size:17.75px;color:#191b23;font-weight:normal;">0</div>
<div class="t" style="right:555.00px;top:938.67px;font-size:17.75px;color:#191b23;font-weight:normal;">46</div>
<div class="a" style="left:1055px;top:938.7px;width:15px;height:15px;border-radius:50%;background:#ffc43a"></div>
<div class="t" style="right:459.40px;top:938.67px;font-size:17.75px;color:#191b23;font-weight:normal;">43</div>
<div class="a" style="left:1150.3px;top:938.7px;width:15px;height:15px;border-radius:50%;background:#ffc43a"></div>
<div class="t" style="right:334.50px;top:938.67px;font-size:17.75px;color:#191b23;font-weight:normal;">0.90</div>
<div class="t" style="right:266.60px;top:938.67px;font-size:17.75px;color:#191b23;font-weight:normal;">0.50</div>
<svg class="a" style="left:1352.5px;top:938.1px" width="19" height="16" viewBox="0 0 19 16"><path d="M6.5 14.6 H1.9 Q1 14.6 1 13.7 V2 Q1 1 2 1 H16.6 Q17.6 1 17.6 2 V5.5" fill="none" stroke="#9a9ca6" stroke-width="1.9"/><rect x="1" y="1" width="16.6" height="3" fill="#9a9ca6"/><circle cx="11.8" cy="10" r="3" fill="none" stroke="#9a9ca6" stroke-width="1.9"/><path d="M14 12.2 L16.6 14.8" stroke="#9a9ca6" stroke-width="2" stroke-linecap="round"/></svg>
<div class="a" style="left:1381.5px;top:934.4px;width:1px;height:23.5px;background:#d5d7de"></div>
<div class="t" style="left:1392.40px;top:938.67px;font-size:17.75px;color:#4a4c57;font-weight:normal;">7</div>
<div class="a" style="left:1392.4px;top:959.7px;width:9.9px;height:0;border-top:1px dashed #4a4c57"></div>
<div class="t" style="right:68.00px;top:938.67px;font-size:17.75px;color:#191b23;font-weight:normal;">1 month</div>
<svg class="a" style="left:1538px;top:936.7px" width="19" height="19" viewBox="0 0 19 19"><path d="M14.3 14.5 A7.3 7.3 0 1 1 14.7 4.6" fill="none" stroke="#006dca" stroke-width="2.3" stroke-linecap="round"/><path d="M16.2 1.6 V7.6 H10.9" fill="none" stroke="#006dca" stroke-width="2.3" stroke-linecap="round" stroke-linejoin="round"/></svg>
<div class="a" style="left:0;top:923px;width:1600px;height:30px;background:rgba(249,249,251,0.56)"></div>
<div class="a" style="left:0;top:953px;width:1600px;height:15px;background:#fff"></div>
</body></html>
